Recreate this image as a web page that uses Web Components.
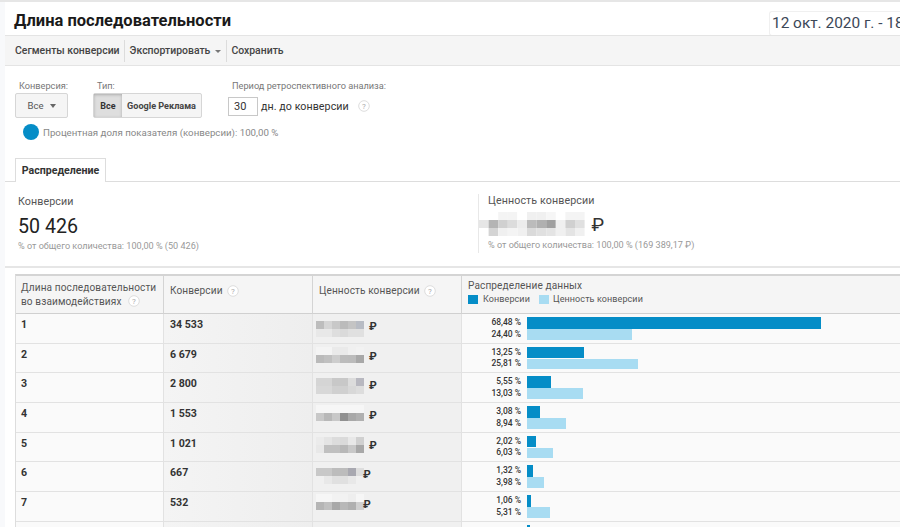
<!DOCTYPE html>
<html lang="ru"><head><meta charset="utf-8"><title>Длина последовательности</title>
<style>
html,body{margin:0;height:527px;overflow:hidden;background:#fff;font-family:Roboto,"Liberation Sans",sans-serif}
</style></head><body>
<ga-page>
  <ga-header title="Длина последовательности" date="12 окт. 2020 г. - 18 окт. 2020 г."></ga-header>
  <ga-toolbar></ga-toolbar>
  <ga-controls></ga-controls>
  <ga-tabs></ga-tabs>
  <ga-scorecards></ga-scorecards>
  <ga-table></ga-table>
</ga-page>
<script>
const base = ':host{display:block;box-sizing:border-box}*{box-sizing:border-box}';
const help = (s=12,c='#ccc')=>`<svg width="${s}" height="${s}" viewBox="0 0 12 12" style="vertical-align:-2px;flex:none"><circle cx="6" cy="6" r="5.3" fill="#fff" stroke="${c}"/><text x="6" y="8.6" font-size="8" text-anchor="middle" fill="#aaa" font-family="Roboto">?</text></svg>`;
function def(name, render){
  customElements.define(name, class extends HTMLElement{
    connectedCallback(){
      if(this.shadowRoot) return;
      this.attachShadow({mode:'open'}).innerHTML = render(this);
    }
  });
}
def('ga-page', ()=>`<style>:host{display:block;height:527px;overflow:hidden;background:#f8f9fb;padding-left:5px;position:relative}
.top{height:2px;background:#e6e6e6;margin-left:-5px}
.in{background:#fff;height:525px;overflow:hidden}</style><div class="top"></div><div class="in"><slot></slot></div>`);
def('ga-header', h=>`<style>${base}:host{height:33px;display:flex;justify-content:space-between;align-items:flex-start;overflow:hidden}
h1{margin:8px 0 0 9px;font:700 16.5px/21px Roboto,sans-serif;color:#1a1a1a}
.d{margin-top:9px;width:131px;height:25px;border:1px solid #f0f0f0;border-right:0;border-radius:3px 0 0 3px;padding-left:2px;font:400 15.4px/22px Roboto,sans-serif;color:#3c4858;white-space:nowrap;overflow:hidden;background:#fff}</style>
<h1>${h.getAttribute('title')}</h1><div class="d">${h.getAttribute('date')}</div>`);
def('ga-toolbar', ()=>`<style>${base}:host{height:31px;background:#f5f5f5;border-top:1px solid #e4e4e4;border-bottom:1px solid #e4e4e4;display:flex;align-items:center;padding-left:10px;font:500 10.45px Roboto,sans-serif;color:#444}
span{display:flex;align-items:center;height:100%;white-space:nowrap}
i{width:1px;height:22px;background:#dcdcdc;margin:0 4.5px}
b{display:inline-block;border:3px solid transparent;border-top:3.5px solid #777;border-bottom:0;margin-left:5px;margin-top:1px}</style>
<span>Сегменты конверсии</span><i></i><span>Экспортировать<b></b></span><i></i><span>Сохранить</span>`);
def('ga-controls', ()=>`<style>${base}:host{height:89px;padding:13px 0 0 10px;font:400 9.2px Roboto,sans-serif;color:#777;position:relative}
.r{display:flex;align-items:flex-start}
label{display:block;height:14px;line-height:14px;margin-bottom:0;white-space:nowrap}
.btn{display:flex;align-items:center;justify-content:center;height:25px;border:1px solid #d6d6d6;border-radius:2px;background:#f5f5f5;color:#555;font-size:9.6px}
b.c{display:inline-block;border:3.5px solid transparent;border-top:4px solid #666;border-bottom:0;margin-left:6px}
.seg{display:flex;width:109px;height:25px;border:1px solid #d6d6d6;border-radius:2px;background:#f5f5f5;font-weight:700;font-size:9.1px;color:#444}
.seg div{display:flex;align-items:center;justify-content:center}
.seg .on{width:28px;background:#dedede;box-shadow:inset 0 1px 3px rgba(0,0,0,.22);color:#333;font-size:9px}
.seg .off{flex:1}
.inp{display:flex;align-items:center;height:26px;color:#333;font-size:10.7px;letter-spacing:.05px;white-space:nowrap}
.box{width:30px;height:19px;border:1px solid #c8c8c8;line-height:18px;padding-left:5px;background:#fff;margin-right:3px;font-size:11px;color:#333;margin-top:1px}
.pc{display:flex;align-items:center;margin:5px 0 0 8px;color:#888;font-size:9.7px}
.dot{width:16px;height:16px;border-radius:50%;background:#058dc7;margin-right:4px}</style>
<div class="r">
 <div style="width:78px"><label style="padding-left:4px">Конверсия:</label><div class="btn" style="width:53px">Все<b class="c"></b></div></div>
 <div style="width:135px"><label style="padding-left:4px">Тип:</label><div class="seg"><div class="on">Все</div><div class="off">Google Реклама</div></div></div>
 <div><label style="padding-left:4px">Период ретроспективного анализа:</label><div class="inp"><span class="box">30</span>дн. до конверсии<span style="margin-left:9px;display:inline-flex">${help(12,'#ddd')}</span></div></div>
</div>
<div class="pc"><span class="dot"></span>Процентная доля показателя (конверсии): 100,00 %</div>`);
def('ga-tabs', ()=>`<style>${base}:host{height:27px;padding:3px 0 0 10px;border-bottom:1px solid #ddd}
div{width:91px;height:24px;border:1px solid #ddd;border-bottom:0;font:700 10.6px/23px Roboto,sans-serif;color:#333;text-align:center;background:#fff;position:relative}</style><div>Распределение</div>`);
const mos=(rows,w=8,h=8)=>{
  const cols=rows[0].length;
  let r='';rows.forEach((row,y)=>row.forEach((c,x)=>{r+=`<rect x="${x*w}" y="${y*h}" width="${w}" height="${h}" fill="#${c}"/>`}));
  return `<svg width="${cols*w}" height="${rows.length*h}" style="display:block;flex:none"><g>${r}</g></svg>`;
};
def('ga-scorecards', ()=>`<style>${base}:host{height:86px;border-bottom:2px solid #e6e6e6;display:flex;color:#444}
.a{width:473px;padding:13px 0 0 13px}.b{flex:1;padding:0}
.in{margin-top:12px;border-left:1px solid #e8e8e8;height:59px;padding-left:9px}
.t{font:400 10.7px/13px Roboto,sans-serif;color:#555;letter-spacing:.1px}
.v{font:400 19.6px/24px Roboto,sans-serif;color:#222;margin-top:7px}
.s{font:400 9.1px/12px Roboto,sans-serif;color:#999;margin-top:1px}
.m{display:flex;align-items:center;height:24px;margin-left:-9px;margin-top:5px;font:400 19px Roboto,sans-serif;color:#333}</style>
<div class="a"><div class="t">Конверсии</div><div class="v">50 426</div><div class="s">% от общего количества: 100,00 % (50 426)</div></div>
<div class="b"><div class="in"><div class="t" style="margin-top:1px">Ценность конверсии</div>
<div class="m">${mos([['fff','fff','f4f4f4','f4f4f4','fff','f0f0f0','f0f0f0','f6f6f6','fff','f4f4f4','f4f4f4'],['e6e6e6','b4b4b4','d0d0d0','dcdcdc','ececec','bbb','b0b0b0','a0a0a0','f0f0f0','d0d0d0','e0e0e0'],['fff','d4d4d4','f0f0f0','f4f4f4','f0f0f0','dadada','e0e0e0','e4e4e4','f0f0f0','e4e4e4','f0f0f0']],9.6,8)}<span style="margin-left:7px">₽</span></div>
<div class="s" style="margin-top:3px">% от общего количества: 100,00 % (169 389,17 ₽)</div></div></div>`);
const data=[
 ['1','34 533','68,48 %','24,40 %',294,104.5,[['bdbdbd','d5d5d5','c8c8c8','bbbbbb','c4c4c4','b8bcc4'],['e8e8e8','e8e8e8','dedede','dadada','e0e0e0','e0e0e0']],52,4],
 ['2','6 679','13,25 %','25,81 %',56.5,111,[['f4f4f4','f4f4f4','eaeaea','eaeaea','f0f0f0','f2f2f2'],['bababa','c0c0c0','cdcdcd','bcbcbc','bbbbbb','a8a8a8']],52,0],
 ['3','2 800','5,55 %','13,03 %',23.5,56,[['d5d5d5','d5d5d5','c8c8c8','c8c8c8','dcdcdc','b8b8c0'],['d8d8d8','d8d8d8','d0d0d0','d0d0d0','d8d8d8','dddddd']],52,2],
 ['4','1 553','3,08 %','8,94 %',13,38.5,[['f6f6f6','f6f6f6','f6f6f6','f6f6f6','f6f6f6','f6f6f6'],['c8c8c8','b8b8b8','c8c8c8','909090','a8a8a8','b0b0b0']],52,-1],
 ['5','1 021','2,02 %','6,03 %',9,25.5,[['ebebeb','e4e4e4','dcdcdc','dadada','e8e8e8','d0d0d0'],['e8e8e8','c0c0c0','c0c0c0','b8b8b8','c8c8c8','a8a8a8']],52,1],
 ['6','667','1,32 %','3,98 %',6,17,[['c8c8c8','c8c8c8','bcbcbc','bcbcbc','a8a8b0','dddddd'],['f0f0f0','e8e8e8','e0e0e0','e0e0e0','e8e8e8','f0f0f0']],47,3],
 ['7','532','1,06 %','5,31 %',4,23,[['f6f6f6','f6f6f6','f2f2f2','f2f2f2','eeeeee','f6f6f6'],['b5b5b5','c0c0c0','a8a8a8','b8b8b8','b0b0b0','d0d0d0']],47,-1],
 ['','','','',3,10,null,52,0]
];
def('ga-table', ()=>`<style>${base}:host{margin:6px 0 0 10px;border-top:2px solid #d4d4d4;border-left:1px solid #ddd;font-family:Roboto,sans-serif}
.g{display:grid;grid-template-columns:148px 149px 149px 1fr}
.h>div{height:38px;background:#f5f5f5;border-bottom:1px solid #d0d0d0;border-right:1px solid #d4d4d4;display:flex;align-items:center;padding-left:5px;font-size:10.1px;color:#555;letter-spacing:.1px;line-height:14px}
.h>div:nth-child(2),.h>div:nth-child(3){padding:0 0 7px 6px}
.h>div:last-child{border-right:0;display:block;padding:3px 0 0 6px}
.h svg{margin-left:4px}
.r>div{height:29.7px;border-bottom:1px solid #e2e2e2;border-right:1px solid #e2e2e2;font-size:10.6px;font-weight:700;color:#333;padding:4px 0 0 5px;line-height:14px}
.r>div:nth-child(1){background:#fafafa}
.r>div:nth-child(2){background:linear-gradient(90deg,#f4f4f4,#eeeeee);padding-left:6px}
.r>div:nth-child(3){background:#f0f0f0;padding:3px 0 0 3px}
.r>div:nth-child(4){background:#fafafa;border-right:0;padding:3px 0 0 0;display:flex}
.val{display:flex;align-items:flex-start}
.val span{margin-left:3px;font-size:11px;line-height:14px}
.lb{width:65px;text-align:right;font-size:8.5px;line-height:11.5px;font-weight:500;color:#333;padding-right:6px;white-space:nowrap}
.br i{display:block;height:11.5px;background:#058dc7}.br i+i{height:10.5px;background:#a8dcf2;margin-top:.5px}
.lg{display:flex;align-items:center;margin-top:-1px;font-size:9px;letter-spacing:.1px}
.sq{width:10px;height:9px;margin-right:5px}
.c2{margin-left:9px;margin-right:4px}
.t2{display:inline-block;margin-top:-1px}</style>
<div class="g h"><div><span>Длина последовательности<br>во взаимодействиях ${help(12,'#ddd')}</span></div><div>Конверсии${help(12,'#ddd')}</div><div>Ценность конверсии${help(12,'#ddd')}</div>
<div><span class="t2">Распределение данных</span><div class="lg"><span class="sq" style="background:#058dc7"></span>Конверсии<span class="sq c2" style="background:#a8dcf2"></span>Ценность конверсии</div></div></div>
${data.map(d=>`<div class="g r"><div>${d[0]}</div><div>${d[1]}</div><div>${d[6]?`<div class="val"><div style="margin-top:${d[8]}px">${mos(d[6])}</div><span style="${d[7]<48?'margin-left:-1px;':'margin-left:5px;'}margin-top:3px">₽</span></div>`:''}</div><div><div class="lb">${d[2]}<br>${d[3]}</div><div class="br"><i style="width:${d[4]}px"></i><i style="width:${d[5]}px"></i></div></div></div>`).join('')}`);
</script></body></html>
